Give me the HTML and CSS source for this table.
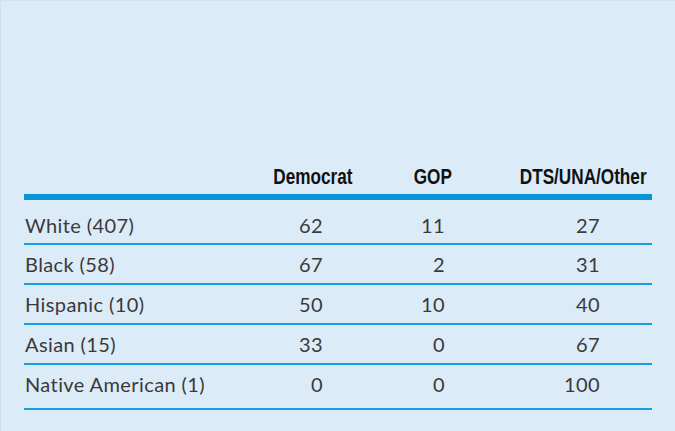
FILE: index.html
```html
<!DOCTYPE html>
<html>
<head>
<meta charset="utf-8">
<link rel="stylesheet" href="styles.css">
</head>
<body>
<div class="panel">
  <div class="table">
    <div class="head">
      <div class="hcell"></div>
      <div class="hcell"><span class="htext">Democrat</span></div>
      <div class="hcell"><span class="htext">GOP</span></div>
      <div class="hcell c4"><span class="htext">DTS/UNA/Other</span></div>
    </div>
    <div class="row first">
      <div class="label">White (407)</div>
      <div class="num c2">62</div>
      <div class="num c3">11</div>
      <div class="num c4">27</div>
    </div>
    <div class="row">
      <div class="label">Black (58)</div>
      <div class="num c2">67</div>
      <div class="num c3">2</div>
      <div class="num c4">31</div>
    </div>
    <div class="row">
      <div class="label">Hispanic (10)</div>
      <div class="num c2">50</div>
      <div class="num c3">10</div>
      <div class="num c4">40</div>
    </div>
    <div class="row">
      <div class="label">Asian (15)</div>
      <div class="num c2">33</div>
      <div class="num c3">0</div>
      <div class="num c4">67</div>
    </div>
    <div class="row last">
      <div class="label">Native American (1)</div>
      <div class="num c2">0</div>
      <div class="num c3">0</div>
      <div class="num c4">100</div>
    </div>
  </div>
</div>
</body>
</html>
```
FILE: styles.css
```css
html, body {
  margin: 0;
  padding: 0;
}
body {
  background: #dcebf8;
  width: 675px;
  height: 431px;
  overflow: hidden;
}
.panel {
  height: 431px;
  box-sizing: border-box;
  border-left: 1px solid #cfe0ee;
  border-top: 1px solid #d3e3f0;
}
.table {
  margin: 0 23px 0 23px;
  padding-top: 164px;
}
.head, .row {
  display: grid;
  grid-template-columns: 236px 92px 100px 200px;
}
.head {
  border-bottom: 6px solid #0a93d6;
  padding-bottom: 5px;
  font-family: "Liberation Sans", Arial, sans-serif;
  font-weight: bold;
  font-size: 22px;
  line-height: 24px;
  color: #111111;
}
.hcell {
  display: flex;
  justify-content: flex-end;
  min-width: 0;
}
.htext {
  flex-shrink: 0;
  white-space: nowrap;
  transform: scaleX(0.78);
  transform-origin: right center;
}
.hcell.c4 {
  padding-right: 5px;
}
.row {
  height: 38px;
  align-items: center;
  border-bottom: 2px solid #1a9de0;
  font-family: "Lato", "Open Sans", sans-serif;
  font-weight: 400;
  font-size: 20px;
  letter-spacing: 0.4px;
  line-height: 24px;
  color: #3a3a3a;
}
.row.first {
  height: 37px;
  padding-top: 6px;
}
.row.last {
  height: 43px;
  align-items: start;
}
.row.last > div {
  padding-top: 7px;
}
.label {
  padding-left: 1px;
}
.num {
  text-align: right;
}
.num.c2 { padding-right: 29px; }
.num.c3 { padding-right: 7px; }
.num.c4 { padding-right: 52px; }
```
